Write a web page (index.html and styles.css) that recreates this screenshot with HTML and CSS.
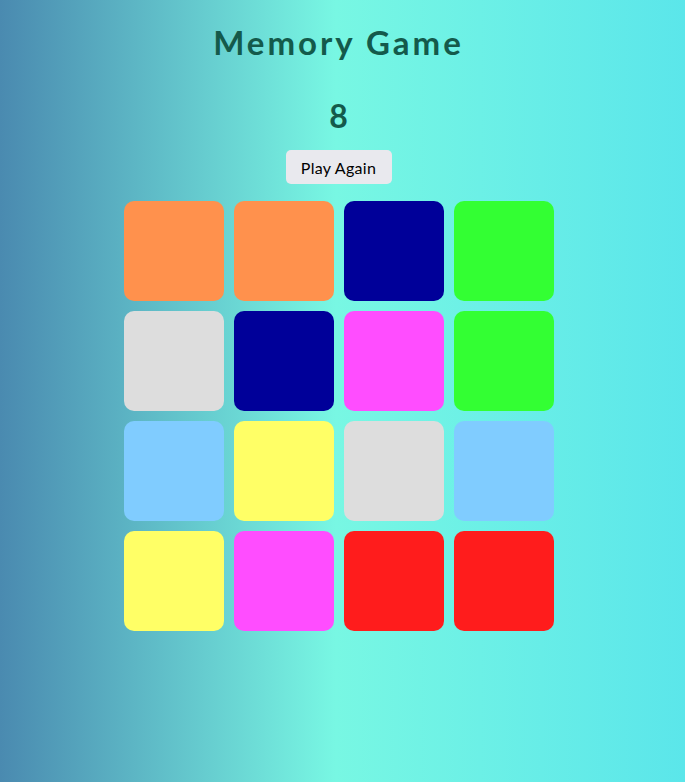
FILE: index.html
```html
<!DOCTYPE html>
<html lang="en">
<head>
<meta charset="utf-8">
<title>Memory Game</title>
<link rel="stylesheet" href="styles.css">
</head>
<body>
<main class="app">
  <h1 class="title">Memory Game</h1>
  <div class="score">8</div>
  <button class="btn">Play Again</button>
  <div class="board">
    <div class="card orange"></div>
    <div class="card orange"></div>
    <div class="card navy"></div>
    <div class="card green"></div>
    <div class="card gray"></div>
    <div class="card navy"></div>
    <div class="card magenta"></div>
    <div class="card green"></div>
    <div class="card sky"></div>
    <div class="card yellow"></div>
    <div class="card gray"></div>
    <div class="card sky"></div>
    <div class="card yellow"></div>
    <div class="card magenta"></div>
    <div class="card red"></div>
    <div class="card red"></div>
  </div>
</main>
</body>
</html>
```
FILE: styles.css
```css
html, body {
  margin: 0;
  height: 100%;
}
body {
  background: linear-gradient(90deg, #4a8ab0 0%, #78f7e3 49%, #5be6ea 100%);
  font-family: Lato, "Open Sans", sans-serif;
}
.app {
  display: flex;
  flex-direction: column;
  align-items: center;
  padding-right: 8px;
}
.title {
  margin: 22px 0 0;
  font-size: 33px;
  line-height: 40px;
  font-weight: 700;
  letter-spacing: 3px;
  color: #145a4b;
}
.score {
  margin-top: 34px;
  font-size: 32px;
  line-height: 40px;
  font-weight: 700;
  color: #145a4b;
}
.btn {
  margin-top: 14px;
  width: 106px;
  height: 34px;
  border: none;
  border-radius: 5px;
  background: #e9e9ee;
  font-family: Lato, sans-serif;
  font-size: 16px;
  letter-spacing: 0.3px;
  color: #000;
  padding: 0;
}
.board {
  margin-top: 17px;
  display: grid;
  grid-template-columns: repeat(4, 100px);
  grid-auto-rows: 100px;
  gap: 10px;
}
.card { border-radius: 10px; }
.orange { background: #ff914d; }
.navy { background: #000099; }
.green { background: #33ff33; }
.gray { background: #dddddd; }
.magenta { background: #ff4dff; }
.sky { background: #80ccff; }
.yellow { background: #ffff66; }
.red { background: #ff1c1c; }
```
